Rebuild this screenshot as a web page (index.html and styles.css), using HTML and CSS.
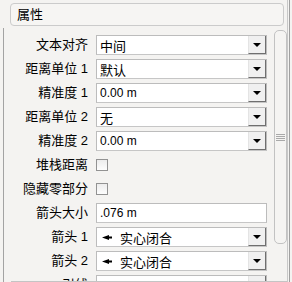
FILE: index.html
```html
<!DOCTYPE html>
<html lang="zh-CN">
<head>
  <meta charset="UTF-8">
  <title>属性</title>
  <link rel="stylesheet" href="styles.css">
</head>
<body>

<div class="window">
  <div class="pane">
    <div class="title">属性</div>
    <div class="frame">
      <div class="scroller">
        <div class="props">
          <div class="label">文本对齐</div>
          <div class="field select">中间<span class="drop"><i></i></span></div>

          <div class="label">距离单位 1</div>
          <div class="field select">默认<span class="drop"><i></i></span></div>

          <div class="label">精准度 1</div>
          <div class="field select"><span class="num">0.00 m</span><span class="drop"><i></i></span></div>

          <div class="label">距离单位 2</div>
          <div class="field select">无<span class="drop"><i></i></span></div>

          <div class="label">精准度 2</div>
          <div class="field select"><span class="num">0.00 m</span><span class="drop"><i></i></span></div>

          <div class="label">堆栈距离</div>
          <div class="check-cell"><span class="check"></span></div>

          <div class="label">隐藏零部分</div>
          <div class="check-cell"><span class="check"></span></div>

          <div class="label">箭头大小</div>
          <div class="field"><span class="num">.076 m</span></div>

          <div class="label">箭头 1</div>
          <div class="field select">
            <svg class="arrow" width="10" height="5" viewBox="0 0 10 5"><polygon points="0,2.5 7,0 7,1.5 10,1.5 10,3.5 7,3.5 7,5" fill="#000"/></svg>
            实心闭合<span class="drop"><i></i></span>
          </div>

          <div class="label">箭头 2</div>
          <div class="field select">
            <svg class="arrow" width="10" height="5" viewBox="0 0 10 5"><polygon points="0,2.5 7,0 7,1.5 10,1.5 10,3.5 7,3.5 7,5" fill="#000"/></svg>
            实心闭合<span class="drop"><i></i></span>
          </div>

          <div class="label">引线</div>
          <div class="field select">&nbsp;<span class="drop"><i></i></span></div>
        </div>
        <div class="thumb"><span class="grip"></span></div>
      </div>
      <div class="hline"></div>
    </div>
  </div>
  <div class="edge"></div>
</div>

</body>
</html>
```

FILE: styles.css
```css
body {
  margin: 0;
  background: #f4f3f1;
  color: #000;
  font-family: "Liberation Sans", "Noto Sans CJK SC", sans-serif;
  font-size: 13px;
  overflow: hidden;
}

.window {
  display: flex;
  height: 282px;
}

.pane {
  width: 287px;
}

.title {
  box-sizing: border-box;
  margin: 3px 0 0 10px;
  width: 274px;
  height: 23px;
  padding-left: 6px;
  line-height: 21px;
  border: 1px solid #cbcbcb;
  border-radius: 4px;
  background: #f6f5f3;
}

.frame {
  margin: 2px 0 0 3px;
  border-left: 1px solid #a3a3a3;
  height: 254px;
}

.scroller {
  display: flex;
  height: 253px;
  overflow: hidden;
}

.props {
  display: grid;
  grid-template-columns: 84px 171px;
  grid-auto-rows: 20px;
  column-gap: 8px;
  row-gap: 4px;
  padding-top: 7px;
}

.label {
  text-align: right;
  line-height: 20px;
  white-space: nowrap;
}

.num {
  font-size: 12px;
}

.field {
  position: relative;
  box-sizing: border-box;
  display: flex;
  align-items: center;
  padding-left: 3px;
  background: #fff;
  border: 1px solid #bcbcbc;
  border-bottom-color: #c6c6c6;
  white-space: nowrap;
}

.field .arrow {
  margin: 0 8px 0 2px;
}

.drop {
  position: absolute;
  top: 0;
  right: 0;
  bottom: 0;
  width: 16px;
  display: flex;
  align-items: center;
  justify-content: center;
  background: #f0f0f0;
  border-left: 1px solid #e4e4e4;
  border-right: 1px solid #6f6f6f;
  border-bottom: 1px solid #6f6f6f;
}

.drop i {
  width: 0;
  height: 0;
  border-left: 4px solid transparent;
  border-right: 4px solid transparent;
  border-top: 4px solid #000;
}

.check-cell {
  display: flex;
  align-items: center;
}

.check {
  box-sizing: border-box;
  width: 12px;
  height: 12px;
  border: 1px solid #929292;
  background: linear-gradient(#ececec, #fdfdfd);
}

.thumb {
  box-sizing: border-box;
  flex: none;
  margin: 2px 0 0 7px;
  width: 13px;
  height: 214px;
  border: 1px solid #c2c2c2;
  border-radius: 5px;
  background: #f5f4f2;
  display: flex;
  align-items: center;
  justify-content: center;
}

.grip {
  width: 9px;
  height: 7px;
  background: repeating-linear-gradient(#a9a9a9 0 1px, transparent 1px 2px);
}

.hline {
  margin-left: 7px;
  height: 1px;
  background: #c4c4c4;
}

.edge {
  width: 1px;
  margin-left: 0;
  border-left: 1px solid #c8c8c8;
  border-right: 1px solid #a0a0a0;
}
```
